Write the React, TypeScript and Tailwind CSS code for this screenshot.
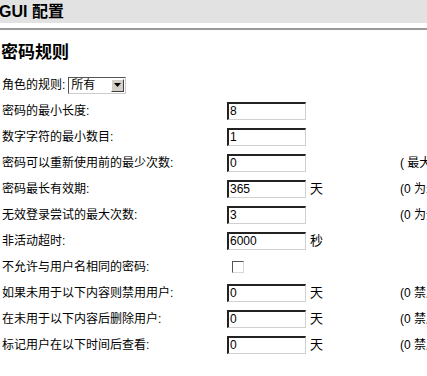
import React from "react";

type Row = {
  label: string;
  value?: string;
  checkbox?: boolean;
  unit?: string;
  note?: string;
};

const rows: Row[] = [
  { label: "密码的最小长度:", value: "8" },
  { label: "数字字符的最小数目:", value: "1" },
  { label: "密码可以重新使用前的最少次数:", value: "0", note: "( 最大 24 )" },
  { label: "密码最长有效期:", value: "365", unit: "天", note: "(0 为永不过期)" },
  { label: "无效登录尝试的最大次数:", value: "3", note: "(0 为无限制)" },
  { label: "非活动超时:", value: "6000", unit: "秒" },
  { label: "不允许与用户名相同的密码:", checkbox: true },
  { label: "如果未用于以下内容则禁用用户:", value: "0", unit: "天", note: "(0 禁用)" },
  { label: "在未用于以下内容后删除用户:", value: "0", unit: "天", note: "(0 禁用)" },
  { label: "标记用户在以下时间后查看:", value: "0", unit: "天", note: "(0 禁用)" },
];

function TextBox({ value }: { value: string }) {
  return (
    <div className="w-[79px] h-[18px] shrink-0 border-t-2 border-l-2 border-t-[#222] border-l-[#222] border-b border-r border-b-[#d0d0d0] border-r-[#d0d0d0] bg-white pl-[1px] text-[12px] leading-[15px]">
      {value}
    </div>
  );
}

function CheckBox() {
  return (
    <div className="ml-[5px] w-[12px] h-[12px] border border-t-[#555] border-l-[#555] border-b-[#d8d8d8] border-r-[#d8d8d8] bg-white" />
  );
}

function Select() {
  return (
    <div className="ml-[3px] flex items-center w-[58px] h-[17px] border border-t-[#555] border-l-[#555] border-b-[#ccc] border-r-[#ccc] bg-white">
      <span className="flex-1 pl-[2px] text-[12px] leading-[14px]">所有</span>
      <div className="mr-[1px] w-[13px] h-[13px] flex items-center justify-center bg-[#d4d0c8] border border-t-white border-l-white border-b-[#404040] border-r-[#404040]">
        <svg width="7" height="4" viewBox="0 0 7 4">
          <polygon points="0,0 7,0 3.5,4" fill="#000" />
        </svg>
      </div>
    </div>
  );
}

export default function App() {
  return (
    <div
      className="w-[427px] h-[376px] overflow-hidden bg-white text-black"
      style={{ fontFamily: '"Liberation Sans", "Noto Sans CJK SC", sans-serif' }}
    >
      {/* Header */}
      <div className="h-[23px] bg-[#e2e2e2] flex items-center -ml-[1px]">
        <span className="text-[16px] font-bold leading-[20px]">GUI 配置</span>
      </div>
      <div className="mt-[5px] h-[2px] bg-[#9a9a9a]" />

      <h2 className="mt-[13px] pl-[1px] text-[17px] font-bold leading-[20px]">密码规则</h2>

      <div className="mt-[9px] text-[12px]">
        <div className="h-[26px] flex items-center pl-[2px]">
          <span>角色的规则:</span>
          <Select />
        </div>
        {rows.map((r) => (
          <div key={r.label} className="h-[26px] flex items-center whitespace-nowrap">
            <div className="w-[227px] shrink-0 pl-[2px]">{r.label}</div>
            <div className="w-[79px] shrink-0">
              {r.checkbox ? <CheckBox /> : <TextBox value={r.value ?? ""} />}
            </div>
            <div className="w-[94px] shrink-0 pl-[4px] text-[13px]">{r.unit}</div>
            <div className="shrink-0">{r.note}</div>
          </div>
        ))}
      </div>
    </div>
  );
}
